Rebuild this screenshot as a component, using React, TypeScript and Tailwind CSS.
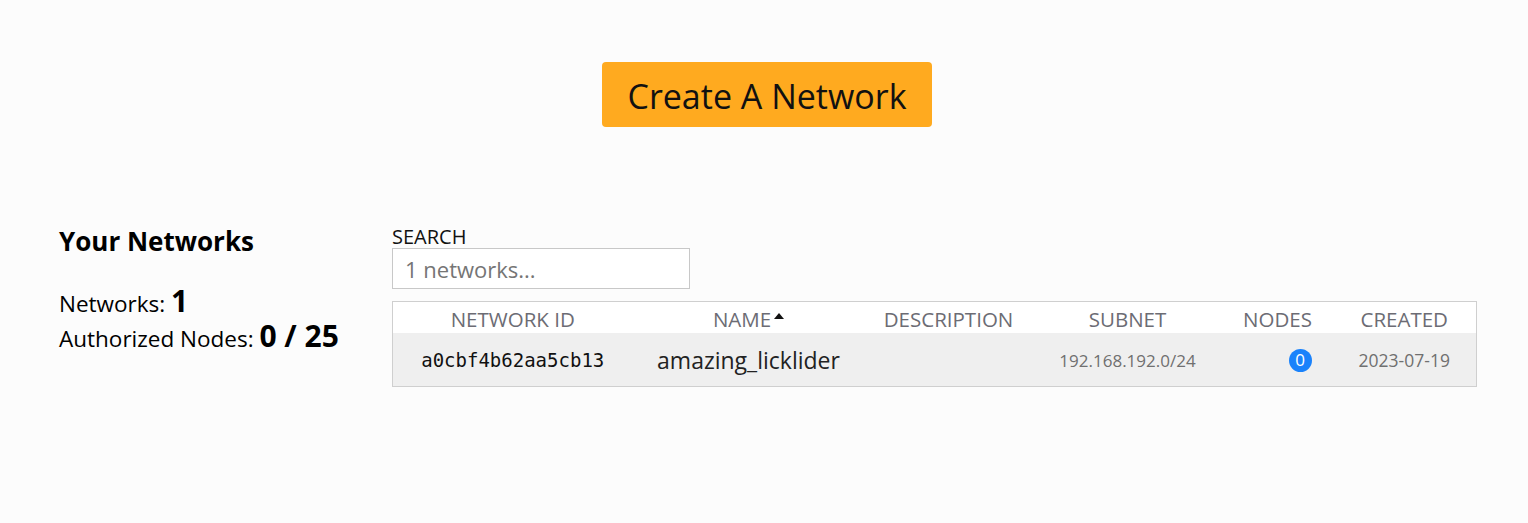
import React from "react";

const networks = [
  {
    id: "a0cbf4b62aa5cb13",
    name: "amazing_licklider",
    description: "",
    subnet: "192.168.192.0/24",
    nodes: 0,
    created: "2023-07-19",
  },
];

const App: React.FC = () => {
  return (
    <div className="min-h-[523px] bg-[#fcfcfc] text-black font-['Open_Sans',sans-serif]">
      <div className="flex justify-center pt-[62px] pl-[6px]">
        <button className="h-[65px] w-[330px] rounded-[4px] bg-[#ffaa1f] pt-[3px] text-[34px] text-[#111]">
          Create A Network
        </button>
      </div>

      <div className="flex pt-[99px] pl-[59px]">
        <div className="w-[333px]">
          <h2 className="text-[26px] font-bold leading-[30px]">Your Networks</h2>
          <div className="mt-[30px] text-[22.5px] leading-[34px]">
            <div>
              Networks: <span className="text-[30px] font-bold leading-none">1</span>
            </div>
            <div>
              Authorized Nodes: <span className="text-[30px] font-bold leading-none">0 / 25</span>
            </div>
          </div>
        </div>

        <div className="w-[1084px]">
          <label className="block text-[20px] leading-[22px] text-[#111]">SEARCH</label>
          <input
            className="h-[41px] w-[298px] border border-[#c8c8c8] bg-white px-[12px] text-[22px] placeholder:text-[#757575] outline-none"
            placeholder="1 networks..."
          />
          <table className="mt-[12px] w-full table-fixed border-collapse border border-[#cfcfcf]">
            <colgroup>
              <col className="w-[240px]" />
              <col className="w-[232px]" />
              <col className="w-[168px]" />
              <col className="w-[190px]" />
              <col className="w-[110px]" />
              <col className="w-[144px]" />
            </colgroup>
            <thead>
              <tr className="h-[31px] bg-white text-[20.5px] leading-[27px] text-[#6c6c74]">
                <th className="pt-[4px] font-normal">NETWORK ID</th>
                <th className="pt-[4px] font-normal">
                  <span className="inline-flex items-center gap-[3px]">
                    NAME
                    <svg width="10" height="6" viewBox="0 0 10 6" className="mb-[8px]">
                      <path d="M0 6 L5 0 L10 6 Z" fill="#111" />
                    </svg>
                  </span>
                </th>
                <th className="pt-[4px] font-normal">DESCRIPTION</th>
                <th className="pt-[4px] font-normal">SUBNET</th>
                <th className="pt-[4px] font-normal">NODES</th>
                <th className="pt-[4px] font-normal">CREATED</th>
              </tr>
            </thead>
            <tbody>
              {networks.map((n) => (
                <tr key={n.id} className="h-[53px] bg-[#efefef]">
                  <td className="pt-[2px] text-center font-['DejaVu_Sans_Mono',monospace] text-[19px] text-[#111]">
                    {n.id}
                  </td>
                  <td className="pt-[2px] text-center text-[23px] text-[#222]">{n.name}</td>
                  <td className="text-center">{n.description}</td>
                  <td className="pt-[2px] text-center text-[17px] text-[#707070]">{n.subnet}</td>
                  <td className="pt-[2px] pr-[21px] text-right">
                    <span className="inline-flex h-[23px] w-[23px] items-center justify-center rounded-full bg-[#1a82fb] text-[17px] text-white">
                      {n.nodes}
                    </span>
                  </td>
                  <td className="pt-[2px] text-center text-[17.5px] text-[#707070]">{n.created}</td>
                </tr>
              ))}
            </tbody>
          </table>
        </div>
      </div>
    </div>
  );
};

export default App;
